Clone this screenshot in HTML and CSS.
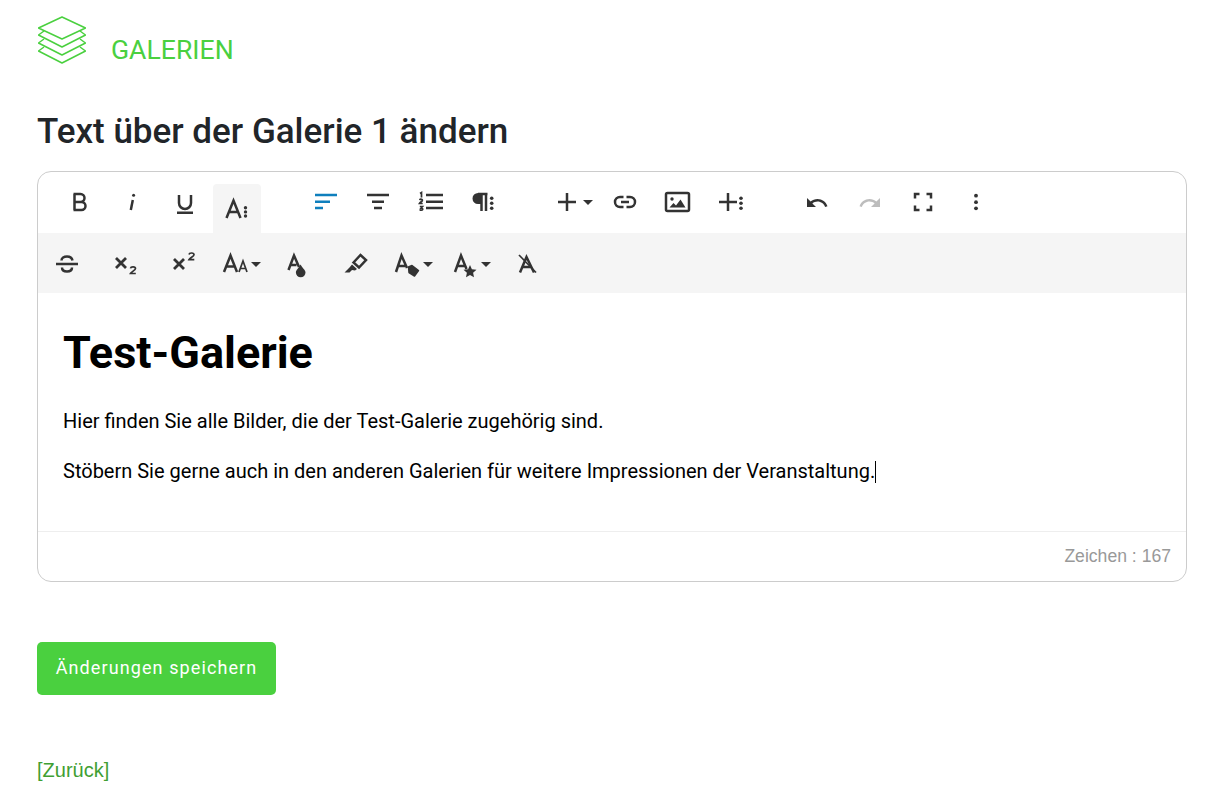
FILE: index.html
```html
<!DOCTYPE html>
<html lang="de">
<head>
  <meta charset="UTF-8">
  <meta name="viewport" content="width=device-width, initial-scale=1.0">
  <title>Galerien</title>
  <link rel="stylesheet" href="styles.css">
</head>
<body>
  <header class="page-head">
    <svg class="layers" width="48" height="48" viewBox="0 0 48 48">
      <path d="M24 1L47.5 12 24 23 .5 12z"/>
      <path d="M6 15L.5 19 24 31 47.5 19 42 15"/>
      <path d="M6 23L.5 27 24 39 47.5 27 42 23"/>
      <path d="M6 31L.5 35 24 47 47.5 35 42 31"/>
    </svg>
    <span class="page-title">GALERIEN</span>
  </header>

  <h1 class="form-title">Text über der Galerie 1 ändern</h1>

  <div class="editor">
    <div class="toolbar toolbar-main">
      <div class="tb-group">
        <button class="tb-btn"><svg class="ico" viewBox="0 0 24 24"><path d="M7.500 4v16M6.500 4h7a4 4 0 0 1 0 8h-6M7.500 12h7a4 4 0 0 1 0 8h-8"/></svg></button>
        <button class="tb-btn"><svg class="ico" viewBox="0 0 24 24"><path d="M12.800 10l-2 10"/><circle class="fill" cx="13.600" cy="5.200" r="1.500"/></svg></button>
        <button class="tb-btn"><svg class="ico" viewBox="0 0 24 24"><path d="M6 5v8a6 6 0 0 0 12 0V5M4 22.700h16"/></svg></button>
        <button class="tb-btn tb-active"><svg class="ico" viewBox="0 0 24 24"><path d="M1.500 21L8.500 3.500 15.500 21M4 15h9"/><circle class="fill" cx="20.500" cy="10.700" r="1.700"/><circle class="fill" cx="20.500" cy="14.900" r="1.700"/><circle class="fill" cx="20.500" cy="19" r="1.700"/></svg></button>
      </div>
      <div class="tb-group group-align">
        <button class="tb-btn"><svg class="ico ico-blue" viewBox="0 0 24 24"><path d="M2 5h22M2 11.700h15M2 18h8"/></svg></button>
        <button class="tb-btn"><svg class="ico" viewBox="0 0 24 24"><path d="M1 5h22M6 11.700h12M8 18h8"/></svg></button>
        <button class="tb-btn"><svg class="ico" viewBox="0 0 24 24"><path d="M7 5h17M7 11.700h17M7 18h17"/><path class="thin" d="M1 3.500l1.500-1v5M.5 10c1-1.500 3.300-.8 2.800.6-.3.800-2 1.500-2.800 2.900h3.200M.8 16.500h2.700l-1.500 1.800c1.500-.2 2 .5 1.600 1.300-.4.800-2 .8-2.800.2"/></svg></button>
        <button class="tb-btn"><svg class="ico" viewBox="0 0 24 24"><path class="fill" d="M6 3h3v11H6A5.500 5.500 0 0 1 6 3z"/><path d="M9.500 3v18M14 3v18M6 4h9.500"/><circle class="fill" cx="19.700" cy="8.300" r="1.800"/><circle class="fill" cx="19.700" cy="13.300" r="1.800"/><circle class="fill" cx="19.700" cy="18.300" r="1.800"/></svg></button>
      </div>
      <div class="tb-group group-insert">
        <button class="tb-btn tb-caret tb-plus"><svg class="ico" viewBox="0 0 24 24"><path d="M12 3v18M3 12h18"/></svg><span class="caret"></span></button>
        <button class="tb-btn"><svg class="ico" viewBox="0 0 24 24"><path d="M10.500 7H7a5 5 0 0 0 0 10h3.500M13.500 7H17a5 5 0 0 1 0 10h-3.500M8 12h8"/></svg></button>
        <button class="tb-btn"><svg class="ico" viewBox="0 0 24 24"><rect x="0" y="3" width="23" height="18" rx="1.500"/><circle class="fill" cx="6" cy="9" r="1.700"/><path class="fill" d="M3.500 17.500l4-4.500 2.500 2.500 4.500-6 5 8z"/></svg></button>
        <button class="tb-btn"><svg class="ico" viewBox="0 0 24 24"><path d="M9 3v18M0 12h18"/><circle class="fill" cx="22" cy="8.300" r="1.800"/><circle class="fill" cx="22" cy="13.300" r="1.800"/><circle class="fill" cx="22" cy="18.300" r="1.800"/></svg></button>
      </div>
      <div class="tb-group group-history">
        <button class="tb-btn"><svg class="ico" viewBox="0 0 24 24"><path class="fill" d="M12.500 9c-2.650 0-5.050.99-6.900 2.600L2 8v9h9l-3.620-3.620c1.390-1.160 3.160-1.880 5.120-1.880 3.540 0 6.550 2.310 7.600 5.500l2.370-.78C21.080 12.030 17.150 9 12.500 9z"/></svg></button>
        <button class="tb-btn"><svg class="ico" viewBox="0 0 24 24"><path class="fill-off" d="M18.400 11.600C16.550 9.990 14.150 9 11.500 9c-4.650 0-8.580 3.030-9.960 7.220L3.900 17c1.050-3.190 4.050-5.500 7.600-5.500 1.950 0 3.730.72 5.120 1.880L13 17h9V8l-3.600 3.600z"/></svg></button>
        <button class="tb-btn"><svg class="ico" viewBox="0 0 24 24"><path d="M4 8.500V4h4.500M15.500 4H20v4.500M20 15.500V20h-4.500M8.500 20H4v-4.500"/></svg></button>
        <button class="tb-btn"><svg class="ico" viewBox="0 0 24 24"><circle class="fill" cx="12" cy="5.700" r="1.900"/><circle class="fill" cx="12" cy="12.200" r="1.900"/><circle class="fill" cx="12" cy="18.300" r="1.900"/></svg></button>
      </div>
    </div>

    <div class="toolbar toolbar-more">
      <button class="tb-btn"><svg class="ico" viewBox="0 0 24 24"><path d="M1 12h22M17.500 8.500C17 6 15 4.500 12 4.500S6.500 6 6.500 8.500M7 15.500c0 2.500 2 4 5 4s5-1.500 5-4"/></svg></button>
      <button class="tb-btn"><svg class="ico" viewBox="0 0 24 24"><path class="bold" d="M3 6l10 10M13 6L3 16"/><path class="thin" d="M17.500 16.300c.3-2 5-2 5 .2 0 1.800-4 3-5 5h5.300"/></svg></button>
      <button class="tb-btn"><svg class="ico" viewBox="0 0 24 24"><path class="bold" d="M3 7l10 10M13 7L3 17"/><path class="thin" d="M18 2.500c.3-2 5-2 5 .2 0 1.800-4 3-5 5h5.300"/></svg></button>
      <button class="tb-btn tb-caret tb-narrow"><svg class="ico" viewBox="0 0 24 24"><path d="M1 20L7.500 3.500 14 20M3.500 14.500h8"/><path class="thin" d="M16 20l4-11 4 11M17.500 16.500h5"/></svg><span class="caret"></span></button>
      <button class="tb-btn"><svg class="ico" viewBox="0 0 24 24"><path d="M3.500 18L9 3.500 14 15M5.500 13h6"/><path class="fill" d="M15.500 12.500c2 3.500 5 5.500 5 8a4.800 4.800 0 0 1-9.600 0c0-2.500 2.800-4.500 4.600-8z"/></svg></button>
      <button class="tb-btn"><svg class="ico" viewBox="0 0 24 24"><path d="M10.500 10.500L17.500 3l5.500 5-7 7.500-5.500-5z"/><path class="fill" d="M9 12.500l5 4.500-2 1.500-3-.5-2.500 2.500H1.500l5-5z"/></svg></button>
      <button class="tb-btn tb-caret"><svg class="ico" viewBox="0 0 24 24"><path d="M1 20L6.500 3.500 12 16M3 14h7"/><path class="tag" d="M13.500 15L17 13.500 23.500 18.500 19.500 24 14 20.500z"/></svg><span class="caret"></span></button>
      <button class="tb-btn tb-caret"><svg class="ico" viewBox="0 0 24 24"><path d="M2 20L8 3.500 13.500 17M4 14h8"/><path class="fill" d="M17 13l1.900 4.200 4.600.5-3.400 3.100.9 4.500-4-2.300-4 2.300.9-4.500-3.400-3.100 4.600-.5z"/></svg><span class="caret"></span></button>
      <button class="tb-btn tb-clear"><svg class="ico" viewBox="0 0 24 24"><path d="M5 20.500L11.500 5 19 20.500M7.500 15h9"/><path class="thin" d="M4 3l17 17.500"/></svg></button>
    </div>

    <div class="editor-body">
      <h2 class="doc-title">Test-Galerie</h2>
      <p>Hier finden Sie alle Bilder, die der Test-Galerie zugehörig sind.</p>
      <p>Stöbern Sie gerne auch in den anderen Galerien für weitere Impressionen der Veranstaltung.<span class="cursor"></span></p>
    </div>

    <div class="editor-foot">Zeichen : 167</div>
  </div>

  <button class="save-btn">Änderungen speichern</button>

  <p class="back"><a href="#">[Zurück]</a></p>
</body>
</html>
```

FILE: styles.css
```css
body {
  margin: 0;
  padding: 0 30px 0 37px;
  font-family: Roboto, sans-serif;
  color: #212529;
  background: #fff;
}
.page-head {
  display: flex;
  align-items: flex-end;
  padding: 16px 0 0 1px;
  height: 48px;
}
.layers {
  fill: none;
  stroke: #4ad03f;
  stroke-width: 1.5;
  stroke-linejoin: round;
}
.page-title {
  margin: 0 0 -1px 25px;
  font-size: 26.6px;
  line-height: 30px;
  color: #4ad03f;
}
.form-title {
  margin: 45px 0 16px;
  font-size: 35px;
  line-height: 46px;
  font-weight: 500;
  color: #212529;
}
.editor {
  border: 1px solid #ccc;
  border-radius: 14px;
  overflow: hidden;
}
.toolbar {
  display: flex;
  align-items: flex-start;
}
.toolbar-main {
  height: 61px;
  padding-left: 17px;
}
.toolbar-more {
  height: 60px;
  padding: 7px 0 0 5px;
  gap: 10px;
  box-sizing: border-box;
  background: #f5f5f5;
}
.tb-group {
  display: flex;
  align-items: flex-start;
  gap: 5px;
  padding-top: 6px;
}
.group-align {
  margin-left: 40px;
}
.group-insert {
  margin-left: 35px;
}
.group-history {
  margin-left: 38px;
}
.tb-btn {
  display: flex;
  align-items: center;
  justify-content: center;
  flex: none;
  width: 48px;
  height: 48px;
  padding: 0;
  border: none;
  background: none;
}
.tb-active {
  height: 49px;
  margin: 6px 0 0 -1px;
  background: #f5f5f5;
  border-radius: 4px 4px 0 0;
}
.tb-caret {
  justify-content: flex-start;
  padding-left: 6px;
}
.tb-narrow {
  width: 46px;
}
.tb-plus {
  width: 53px;
  padding-left: 12px;
}
.tb-clear {
  margin-left: -2px;
}
.ico {
  flex: none;
  width: 24px;
  height: 24px;
  overflow: visible;
  fill: none;
  stroke: #333;
  stroke-width: 2.5;
}
.ico .fill {
  fill: #333;
  stroke: none;
}
.ico .fill-off {
  fill: #bdbdbd;
  stroke: none;
}
.ico .tag {
  fill: #333;
  stroke-width: 1.5;
  stroke-linejoin: round;
}
.ico .thin {
  stroke-width: 1.7;
}
.ico .bold {
  stroke-width: 2.8;
}
.ico-blue {
  stroke: #0f7fbd;
}
.caret {
  margin-left: 4px;
  border-top: 5px solid #333;
  border-left: 5px solid transparent;
  border-right: 5px solid transparent;
}
.editor-body {
  padding: 31px 25px 0;
  height: 207px;
  color: #000;
  font-size: 20px;
  line-height: 30px;
}
.editor-body p {
  margin: 0 0 20px;
}
.doc-title {
  margin: 0 0 24px;
  font-size: 45px;
  line-height: 58px;
  font-weight: 700;
}
.cursor {
  display: inline-block;
  width: 1px;
  height: 22px;
  background: #000;
  vertical-align: -5px;
}
.editor-foot {
  height: 50px;
  margin: 0;
  padding-right: 15px;
  border-top: 1px solid #eee;
  box-sizing: border-box;
  font-family: "Liberation Sans", Arial, sans-serif;
  font-size: 17.6px;
  line-height: 48px;
  color: #999;
  text-align: right;
}
.save-btn {
  display: block;
  width: 239px;
  height: 53px;
  margin-top: 60px;
  padding-bottom: 3px;
  border: none;
  border-radius: 5px;
  background: #4ad03f;
  color: #fff;
  font-family: Roboto, sans-serif;
  font-size: 18px;
  letter-spacing: 1.1px;
}
.back {
  margin: 60px 0 0;
  font-family: "Liberation Sans", Arial, sans-serif;
  font-size: 20px;
  line-height: 30px;
}
.back a {
  color: #3f9f33;
  text-decoration: none;
}
```
